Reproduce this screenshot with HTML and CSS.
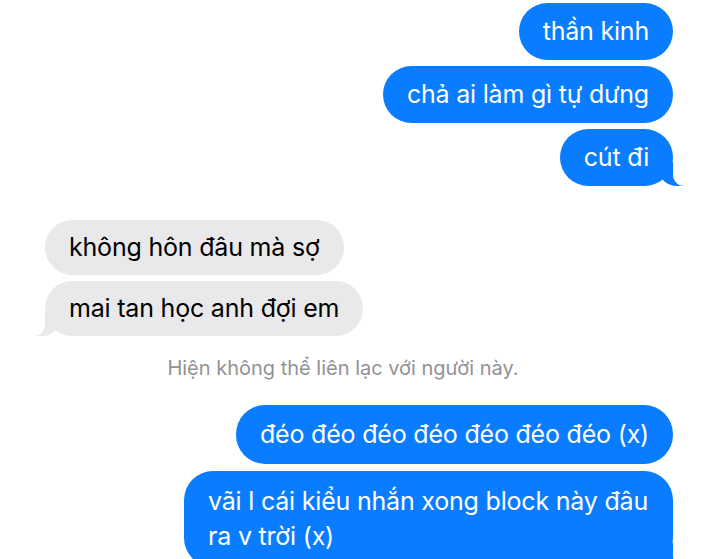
FILE: index.html
```html
<!DOCTYPE html>
<html lang="vi">
<head>
    <meta charset="UTF-8">
    <meta name="viewport" content="width=device-width, initial-scale=1.0">
    <title>Tin nhắn</title>
    <link rel="stylesheet" href="styles.css">
</head>
<body>
    <div class="chat">
        <div class="group sent">
            <div class="bubble">thần kinh</div>
            <div class="bubble">chả ai làm gì tự dưng</div>
            <div class="bubble tail">cút đi</div>
        </div>

        <div class="group received">
            <div class="bubble">không hôn đâu mà sợ</div>
            <div class="bubble tail">mai tan học anh đợi em</div>
        </div>

        <div class="status">Hiện không thể liên lạc với người này.</div>

        <div class="group sent">
            <div class="bubble">đéo đéo đéo đéo đéo đéo đéo (x)</div>
            <div class="bubble tail wide">vãi l cái kiểu nhắn xong block này đâu ra v trời (x)</div>
        </div>
    </div>
</body>
</html>
```

FILE: styles.css
```css
body {
    margin: 0;
    background-color: #fff;
    font-family: Inter, "Noto Sans", sans-serif;
    overflow: hidden;
}
.chat {
    display: flex;
    flex-direction: column;
    padding: 3px 47px 0 45px;
}
.group {
    display: flex;
    flex-direction: column;
    gap: 6px;
}
.sent {
    align-items: flex-end;
}
.received {
    align-items: flex-start;
    margin-top: 34px;
}
.bubble {
    position: relative;
    font-size: 25px;
    line-height: 35px;
    letter-spacing: -0.2px;
    padding: 11px 24px;
    border-radius: 29px;
}
.sent .bubble {
    background-color: #0a7cff;
    color: #fff;
}
.received .bubble {
    background-color: #e9e9eb;
    color: #000;
    padding-top: 10px;
    padding-bottom: 10px;
}
.bubble.wide {
    max-width: 441px;
    padding-top: 13px;
    padding-bottom: 13px;
}

/* tails */
.tail::before,
.tail::after {
    content: "";
    position: absolute;
    bottom: 0;
    height: 24px;
}
.sent .tail::before {
    right: -10px;
    width: 24px;
    background-color: #0a7cff;
    border-bottom-left-radius: 18px 16px;
}
.sent .tail::after {
    right: -26px;
    width: 26px;
    background-color: #fff;
    border-bottom-left-radius: 11px;
}
.received .tail::before {
    left: -9px;
    width: 24px;
    background-color: #e9e9eb;
    border-bottom-right-radius: 18px 16px;
}
.received .tail::after {
    left: -26px;
    width: 26px;
    background-color: #fff;
    border-bottom-right-radius: 11px;
}

.status {
    margin: 20px 0 0 -12px;
    padding-right: 20px;
    text-align: center;
    font-size: 20px;
    line-height: 24px;
    color: #929296;
}
.status + .group {
    margin-top: 25px;
    gap: 7px;
}
.status + .group .bubble:first-child {
    padding-top: 12px;
    padding-bottom: 12px;
}
```
